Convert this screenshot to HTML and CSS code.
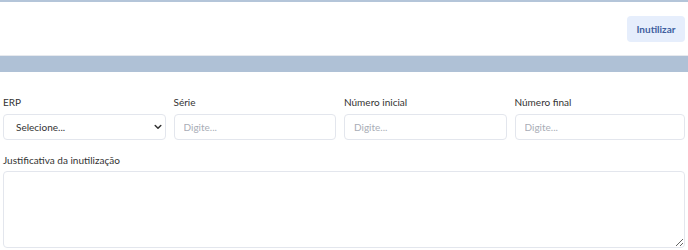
FILE: index.html
```html
<!DOCTYPE html>
<html lang="pt-BR">
<head>
  <meta charset="UTF-8" />
  <meta name="viewport" content="width=device-width, initial-scale=1.0" />
  <title>Inutilização</title>
  <link rel="stylesheet" href="styles.css">
</head>
<body>
  <div class="toolbar">
    <button class="btn-inutilizar">Inutilizar</button>
  </div>
  <div class="band"></div>

  <form class="form">
    <div class="row">
      <div class="field">
        <label>ERP</label>
        <div class="select-wrap">
          <select>
            <option>Selecione...</option>
          </select>
          <svg class="chevron" width="8" height="6" viewBox="0 0 8 6"><path d="M1.2 1.5l2.8 2.8 2.8-2.8" fill="none" stroke="#333" stroke-width="1.5" stroke-linecap="round" stroke-linejoin="round"/></svg>
        </div>
      </div>
      <div class="field">
        <label>Série</label>
        <input type="text" placeholder="Digite...">
      </div>
      <div class="field">
        <label>Número inicial</label>
        <input type="text" placeholder="Digite...">
      </div>
      <div class="field">
        <label>Número final</label>
        <input type="text" placeholder="Digite...">
      </div>
    </div>

    <div class="field field-text">
      <label>Justificativa da inutilização</label>
      <textarea></textarea>
    </div>
  </form>
</body>
</html>
```

FILE: styles.css
```css
* {
  box-sizing: border-box;
}

body {
  margin: 0;
  font-family: Lato, "Open Sans", sans-serif;
  color: #333;
  background: #fff;
  border-top: 2px solid #b4c5d9;
}

.toolbar {
  height: 54px;
  display: flex;
  justify-content: flex-end;
  align-items: flex-start;
  padding: 14px 3px 0 0;
  border-bottom: 1px solid #e6e9ee;
}

.btn-inutilizar {
  width: 58px;
  height: 26px;
  padding: 0;
  border: none;
  border-radius: 4px;
  background: #e6eefc;
  color: #3f5f9f;
  font-family: inherit;
  font-size: 10px;
  font-weight: 700;
  cursor: pointer;
}

.band {
  height: 16px;
  background: #afc1d6;
}

.form {
  padding: 24px 3px 0;
}

.row {
  display: grid;
  grid-template-columns: repeat(4, minmax(0, 1fr));
  margin-bottom: 14px;
}

.row .field:not(:last-child) {
  padding-right: 8px;
}

.field label {
  display: block;
  font-size: 10px;
  line-height: 13px;
  margin-bottom: 5px;
  color: #333;
}

.field-text label {
  margin-bottom: 4px;
}

.field input,
.field select,
.field textarea {
  display: block;
  width: 100%;
  border: 1px solid #e3e6ed;
  border-radius: 4px;
  background: #fff;
  font-family: inherit;
  font-size: 10px;
  color: #333;
  outline: none;
}

.field input,
.field select {
  height: 26px;
  padding: 0 9px;
}

.field input::placeholder {
  color: #a9adb6;
}

.select-wrap {
  position: relative;
}

.field select {
  appearance: none;
  -webkit-appearance: none;
  padding-left: 12px;
}

.chevron {
  position: absolute;
  right: 4px;
  top: 10px;
}

.field textarea {
  height: 77px;
  resize: vertical;
}
```
